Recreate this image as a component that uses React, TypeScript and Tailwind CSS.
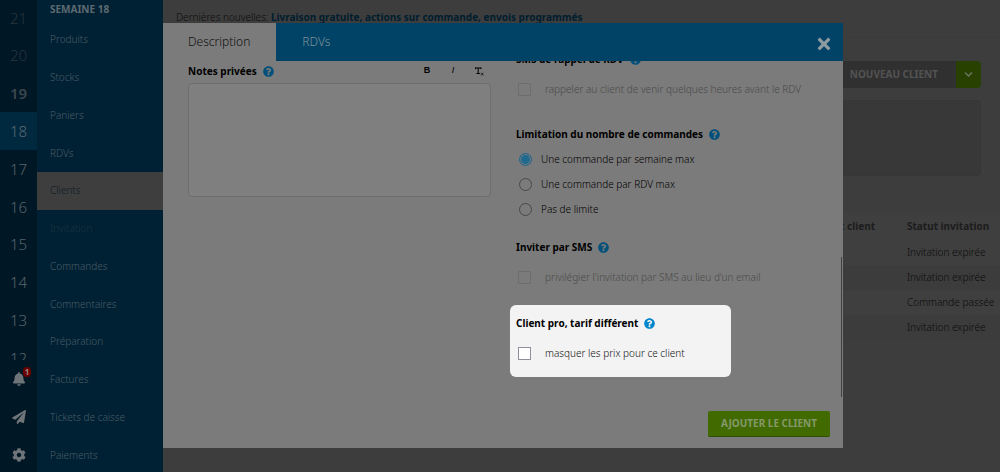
import { useState } from "react";
import type { ReactNode } from "react";
import { clsx } from "clsx";
import {
  FaBell,
  FaChevronDown,
  FaCog,
  FaPaperPlane,
  FaQuestionCircle,
  FaTimes,
} from "react-icons/fa";

const weeks = [21, 20, 19, 18, 17, 16, 15, 14, 13, 12];

const menu = [
  "Produits",
  "Stocks",
  "Paniers",
  "RDVs",
  "Clients",
  "Invitation",
  "Commandes",
  "Commentaires",
  "Préparation",
  "Factures",
  "Tickets de caisse",
  "Paiements",
];

const statuses = [
  "Invitation expirée",
  "Invitation expirée",
  "Commande passée",
  "Invitation expirée",
];

const limits = [
  "Une commande par semaine max",
  "Une commande par RDV max",
  "Pas de limite",
];

const getWeekStyle = (week: number): string => {
  if (week > 19) return "font-light text-[#27343d]";
  if (week === 19) return "font-semibold text-[#3b464d]";
  if (week === 18) return "font-light text-[#5c6b74] bg-[#00283e]";
  return "font-light text-[#5a646b]";
};

const getMenuStyle = (item: string): string => {
  if (item === "Clients") return "bg-[#3e3e3e] text-[#0b1b24]";
  if (item === "Invitation") return "text-[#1b3441]";
  return "text-[#485b66]";
};

function WeekRail() {
  return (
    <div className="flex w-[37px] shrink-0 flex-col bg-[#001725]">
      <div className="min-h-0 flex-1 overflow-hidden">
        <ul className="-mt-px grid h-[105%] auto-rows-fr text-[15px]">
          {weeks.map((week) => (
            <li key={week} className="flex">
              <a
                href="#"
                className={clsx(
                  "flex flex-1 items-center justify-center",
                  getWeekStyle(week)
                )}
              >
                {week}
              </a>
            </li>
          ))}
        </ul>
      </div>
      <div className="-mb-[2px] flex flex-col text-[14px] text-[#6e7478]">
        <button
          aria-label="Notifications"
          className="relative flex h-[38px] items-center justify-center"
        >
          <FaBell />
          <span className="absolute top-[7px] right-[6px] h-[10px] w-[8px] rounded-sm bg-[#6c0000] text-center text-[8px] leading-[10px] font-bold text-[#9a8a8a]">
            1
          </span>
        </button>
        <button
          aria-label="Messages"
          className="flex h-[38px] items-center justify-center"
        >
          <FaPaperPlane />
        </button>
        <button
          aria-label="Paramètres"
          className="flex h-[38px] items-center justify-center"
        >
          <FaCog />
        </button>
      </div>
    </div>
  );
}

function SideMenu() {
  return (
    <nav className="flex w-[126px] shrink-0 flex-col bg-[#002133]">
      <h2 className="h-[21px] pl-[13px] leading-[19px] font-bold text-[#5d6a72]">
        SEMAINE 18
      </h2>
      <ul className="-mb-[2px] grid flex-1 auto-rows-fr font-light">
        {menu.map((item) => (
          <li key={item} className="flex">
            <a
              href="#"
              className={clsx(
                "flex flex-1 items-center pl-[13px]",
                getMenuStyle(item)
              )}
            >
              {item}
            </a>
          </li>
        ))}
      </ul>
    </nav>
  );
}

function ClientsPage() {
  return (
    <main className="flex min-w-0 flex-1 flex-col bg-[#3d3d3d]">
      <p className="h-[38px] border-b border-[#3a3a3a] pl-[13px] leading-[34px] font-light text-[#0b0b0b]">
        Dernières nouvelles:{" "}
        <strong className="font-bold text-[#001e2f]">
          Livraison gratuite, actions sur commande, envois programmés
        </strong>
      </p>
      <div className="mt-[23px] mr-[19px] flex justify-end">
        <button className="h-[27px] bg-[#303030] px-[18px] font-bold text-[#535353]">
          NOUVEAU CLIENT
        </button>
        <button
          aria-label="Plus d'options"
          className="flex h-[27px] w-[25px] items-center justify-center rounded-r-sm bg-[#284100] text-[9px] text-[#6d7562]"
        >
          <FaChevronDown />
        </button>
      </div>
      <div className="mt-[12px] mr-[19px] ml-[12px] h-[76px] rounded-sm border border-[#363636] bg-[#383838]" />
      <table className="mt-[37px] w-full border-collapse text-left">
        <thead>
          <tr className="h-[27px] bg-[#3f3f3f] font-bold text-[#1c1c1c]">
            <th className="pr-[32px] text-right">Statut client</th>
            <th className="w-[93px] whitespace-nowrap">Statut invitation</th>
          </tr>
        </thead>
        <tbody>
          {statuses.map((status, idx) => (
            <tr
              key={idx}
              className="h-[25px] font-light text-[#0b0b0b] odd:bg-[#3f3f3f] even:bg-[#3c3c3c]"
            >
              <td />
              <td className="whitespace-nowrap">{status}</td>
            </tr>
          ))}
        </tbody>
      </table>
    </main>
  );
}

interface SectionTitleProps {
  children: ReactNode;
  bright?: boolean;
}

function SectionTitle({ children, bright }: SectionTitleProps) {
  return (
    <h3 className="flex h-5 items-center gap-[6px] font-bold text-black">
      {children}
      <FaQuestionCircle
        className={clsx("text-[11px]", bright ? "text-[#0086cd]" : "text-[#00507b]")}
      />
    </h3>
  );
}

interface CheckRowProps {
  label: string;
  disabled?: boolean;
}

function CheckRow({ label, disabled }: CheckRowProps) {
  return (
    <label
      className={clsx(
        "mt-2 flex h-[25px] items-center gap-[14px] pl-[2px] font-light whitespace-nowrap",
        disabled ? "text-[#4a4a4a]" : "text-[#111]"
      )}
    >
      <input
        type="checkbox"
        disabled={disabled}
        className={clsx(
          "size-[13px] shrink-0 appearance-none border",
          disabled
            ? "border-[#6e6e72]"
            : "border-[#8f8f9d] bg-white checked:bg-[#0086cd]"
        )}
      />
      {label}
    </label>
  );
}

function NotesEditor() {
  return (
    <div className="min-w-0 flex-1">
      <div className="flex items-center justify-between">
        <SectionTitle>Notes privées</SectionTitle>
        <div className="flex gap-[18px] pr-[7px] font-['Liberation_Sans',sans-serif] text-[9px] text-black">
          <button aria-label="Gras" className="w-2 font-bold">
            B
          </button>
          <button aria-label="Italique" className="w-2 italic">
            I
          </button>
          <button aria-label="Effacer le format">
            <svg width="9" height="9" viewBox="0 0 9 9" fill="none" stroke="currentColor">
              <path d="M0.5 1h5.5M3.2 1v5.5M1.5 6.5h3.4M0.5 0.5v1.6M6 0.5v1.6" />
              <path d="M6 5.8l2.4 2.7M8.4 5.8L6 8.5" strokeWidth="0.7" />
            </svg>
          </button>
        </div>
      </div>
      <textarea
        aria-label="Notes privées"
        className="mt-[2px] block h-[114px] w-full resize-none rounded-sm border border-[#6e6e6e] bg-[#7f7f7f]"
      />
    </div>
  );
}

function ClientOptions() {
  const [limit, setLimit] = useState(0);

  return (
    <div className="-mt-3 w-[333px] shrink-0">
      <section className="px-[6px]">
        <SectionTitle>SMS de rappel de RDV</SectionTitle>
        <CheckRow
          label="rappeler au client de venir quelques heures avant le RDV"
          disabled
        />
      </section>
      <section className="mt-[22px] px-[6px]">
        <SectionTitle>Limitation du nombre de commandes</SectionTitle>
        <div className="mt-[3px]">
          {limits.map((label, idx) => (
            <label
              key={label}
              className="flex h-[25px] items-center gap-[9px] pl-[3px] font-light text-black"
            >
              <input
                type="radio"
                name="limit"
                checked={limit === idx}
                onChange={() => setLimit(idx)}
                className="size-[13px] appearance-none rounded-full border border-[#47474e] checked:border-[#20698f] checked:bg-[#20698f] checked:inset-ring-1 checked:inset-ring-[#7b7b7b]"
              />
              {label}
            </label>
          ))}
        </div>
      </section>
      <section className="mt-[15px] px-[6px]">
        <SectionTitle>Inviter par SMS</SectionTitle>
        <CheckRow
          label="privilégier l'invitation par SMS au lieu d'un email"
          disabled
        />
      </section>
      <section className="mt-[15px] w-[221px] rounded-md bg-[#f3f3f3] px-[6px] pt-2 pb-[11px]">
        <SectionTitle bright>Client pro, tarif différent</SectionTitle>
        <CheckRow label="masquer les prix pour ce client" />
      </section>
    </div>
  );
}

function ClientDialog() {
  return (
    <div className="fixed inset-0 flex pt-[23px] pr-[157px] pb-6 pl-[163px]">
      <div
        role="dialog"
        aria-label="Client"
        className="relative flex min-w-0 flex-1 flex-col bg-[#7b7b7b]"
      >
        <header className="flex h-[38px] shrink-0 bg-[#004366] text-[12px] font-light">
          <button className="bg-[#7b7b7b] pr-[26px] pl-[25px] text-[#111]">
            Description
          </button>
          <button className="px-[26px] text-[#7d919c]">RDVs</button>
          <button
            aria-label="Fermer"
            className="ml-auto px-[10px] pt-[3px] text-[18px] text-[#8f9ba2]"
          >
            <FaTimes />
          </button>
        </header>
        <div className="flex min-h-0 flex-1 gap-[19px] overflow-hidden pl-[25px]">
          <NotesEditor />
          <ClientOptions />
        </div>
        <footer className="flex shrink-0 justify-end pt-[13px] pr-[13px] pb-[11px]">
          <button className="h-[26px] rounded-xs border-b border-[#2f5000] bg-[#416b00] px-[13px] font-bold text-[#85986b]">
            AJOUTER LE CLIENT
          </button>
        </footer>
        <div className="absolute top-[234px] right-px h-[140px] w-px bg-[#3d4044]" />
      </div>
    </div>
  );
}

function App() {
  return (
    <div className="flex h-screen overflow-hidden font-['Noto_Sans',sans-serif] text-[10px]">
      <WeekRail />
      <SideMenu />
      <ClientsPage />
      <ClientDialog />
    </div>
  );
}

export default App;
